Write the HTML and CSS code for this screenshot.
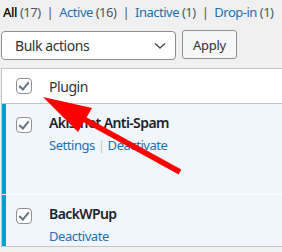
FILE: index.html
```html
<!DOCTYPE html>
<html lang="en">
<head>
  <meta charset="UTF-8" />
  <title>Plugins</title>
  <link rel="stylesheet" href="styles.css">
</head>
<body>
  <ul class="subsubsub">
    <li class="current">All <span class="count">(17)</span></li>
    <li class="sep">|</li>
    <li><a href="#">Active <span class="count">(16)</span></a></li>
    <li class="sep">|</li>
    <li><a href="#">Inactive <span class="count">(1)</span></a></li>
    <li class="sep">|</li>
    <li><a href="#">Drop-in <span class="count">(1)</span></a></li>
  </ul>

  <div class="tablenav">
    <div class="bulk-select">
      <span>Bulk actions</span>
      <svg width="12" height="8" viewBox="0 0 12 8"><path d="M1 1.5 L6 6 L11 1.5" fill="none" stroke="#50575e" stroke-width="1.6"/></svg>
    </div>
    <button class="button">Apply</button>
  </div>

  <div class="plugins">
    <div class="row head">
      <div class="check-column"><span class="cb checked"></span></div>
      <div class="col-name">Plugin</div>
    </div>
    <div class="row active first">
      <div class="check-column"><span class="cb checked"></span></div>
      <div class="col-name">
        <strong>Akismet Anti-Spam</strong>
        <div class="row-actions"><a href="#">Settings</a><span class="bar">|</span><a href="#">Deactivate</a></div>
      </div>
    </div>
    <div class="row active">
      <div class="check-column"><span class="cb checked"></span></div>
      <div class="col-name">
        <strong>BackWPup</strong>
        <div class="row-actions"><a href="#">Deactivate</a></div>
      </div>
    </div>
  </div>

  <!-- annotation arrow drawn over the screenshot -->
  <svg class="arrow" width="282" height="252" viewBox="0 0 282 252">
    <line x1="180" y1="172" x2="80" y2="117" stroke="#f00" stroke-width="5.5"/>
    <polygon points="43,97 92,108 78,132" fill="#f00"/>
  </svg>
</body>
</html>
```

FILE: styles.css
```css
* { margin: 0; padding: 0; box-sizing: border-box; }
html, body { height: 100%; }
body {
  background: #f0f0f1;
  font-family: 'Noto Sans', sans-serif;
  font-size: 13px;
  letter-spacing: -0.45px;
  color: #3c434a;
  padding-left: 1px;
  overflow: hidden;
  position: relative;
}
a { color: #2271b1; text-decoration: none; }

.subsubsub {
  list-style: none;
  display: flex;
  white-space: nowrap;
  padding: 2px 0 0 2px;
  line-height: 20px;
  letter-spacing: -0.5px;
}
.subsubsub li { flex: none; }
.subsubsub .current { color: #000; font-weight: 500; }
.subsubsub .current .count { font-weight: normal; }
.subsubsub .count { color: #50575e; }
.subsubsub .sep { color: #50575e; margin: 0 6px; }

.tablenav {
  display: flex;
  gap: 6px;
  margin-top: 9px;
  height: 29px;
}
.bulk-select {
  width: 175px;
  height: 29px;
  background: #fff;
  border: 1px solid #8c8f94;
  border-radius: 4px;
  display: flex;
  align-items: center;
  justify-content: space-between;
  padding: 0 9px 0 13px;
  font-size: 14px;
  color: #2c3338;
}
.button {
  height: 29px;
  width: 55px;
  margin-top: -1px;
  background: #f6f7f7;
  border: 1px solid #8c8f94;
  border-radius: 3px;
  font-family: inherit;
  font-size: 13px;
  letter-spacing: -0.3px;
  color: #2c3338;
}

.plugins {
  margin-top: 8px;
  background: #fff;
  border: 1px solid #c3c4c7;
  border-right: none;
}
.row {
  display: grid;
  grid-template-columns: 47px 1fr;
}
.row.head {
  height: 35px;
  align-items: center;
  border-bottom: 1px solid #c3c4c7;
}
.row.head .col-name { font-size: 14px; color: #2c3338; }
.check-column { padding-left: 14px; display: flex; }
.row.active { background: #f0f6fc; }
.row.active .check-column {
  border-left: 4px solid #00a0d2;
  padding-left: 10px;
  padding-top: 13px;
}
.row.active .col-name { padding-top: 9px; }
.row.first { height: 91px; border-bottom: 1px solid #fff; }
.row.active strong { display: block; font-size: 14px; font-weight: 600; letter-spacing: -0.6px; color: #1d2327; line-height: 20px; }
.row-actions { margin-top: 2px; line-height: 20px; }
.row-actions .bar { color: #c3c4c7; margin: 0 3px; }

.cb {
  width: 16px;
  height: 16px;
  border: 1px solid #8c8f94;
  border-radius: 4px;
  background: #fff;
  position: relative;
}
.cb.checked::after {
  content: '';
  position: absolute;
  left: 4px;
  top: 1px;
  width: 4px;
  height: 8px;
  border: solid #637583;
  border-width: 0 2.5px 2.5px 0;
  transform: rotate(40deg);
}

.arrow { position: absolute; left: 0; top: 0; pointer-events: none; }
```
